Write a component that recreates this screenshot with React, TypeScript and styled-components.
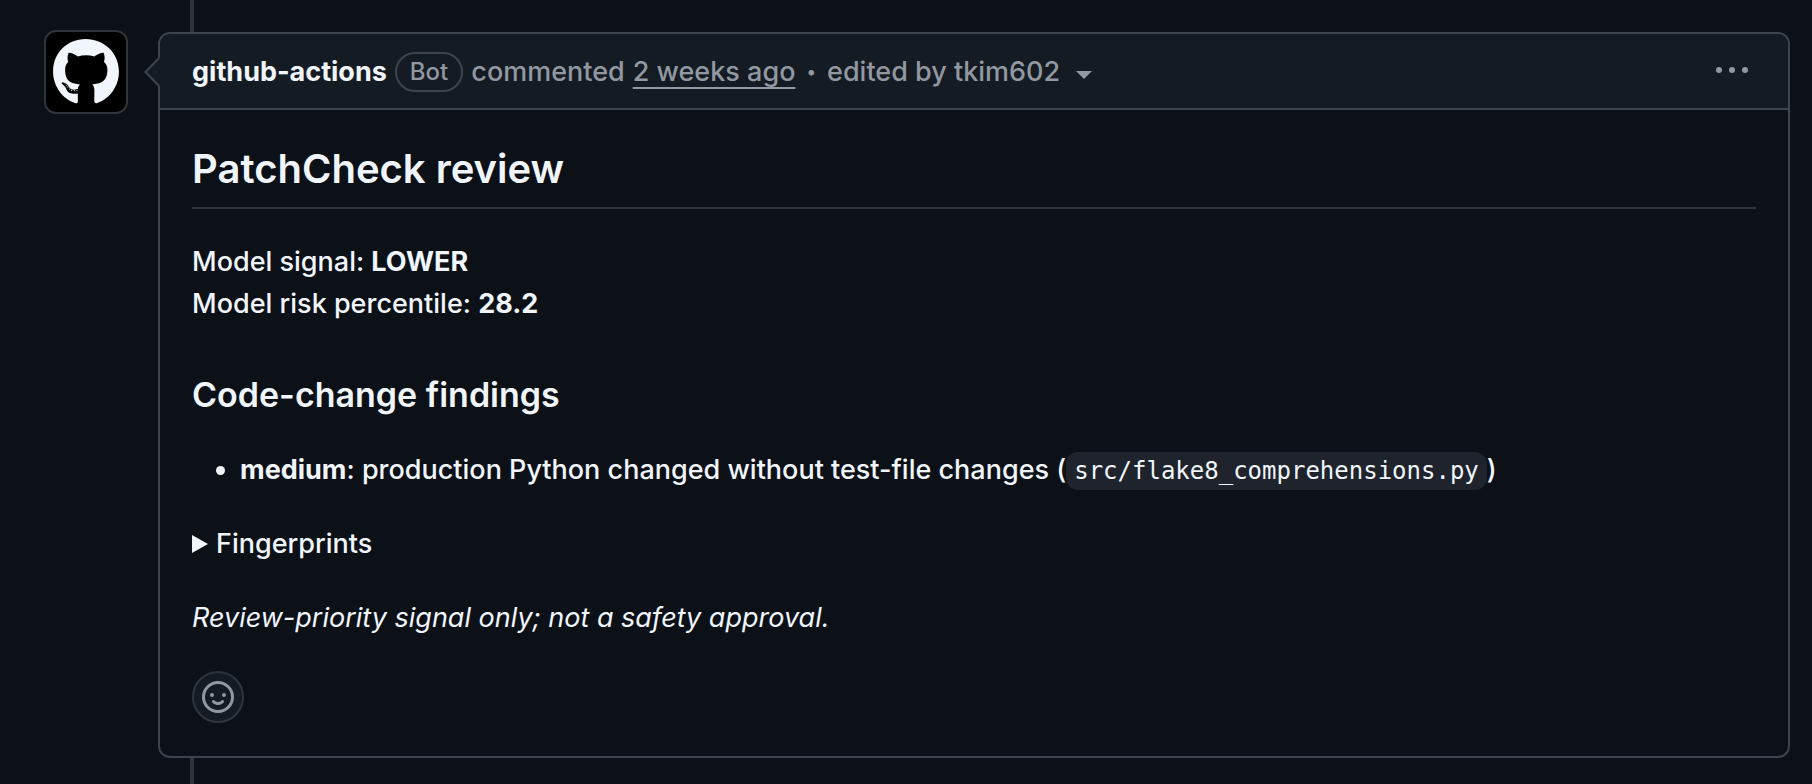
import React from "react";
import styled, { createGlobalStyle } from "styled-components";
import { FaGithub } from "react-icons/fa";

const color = {
  canvas: "#0c1017",
  header: "#151b23",
  border: "#3d444d",
  borderMuted: "#2f353d",
  text: "#f0f6fc",
  muted: "#9198a1",
  code: "#1f242c",
};

const GlobalStyle = createGlobalStyle`
  *, *::before, *::after { box-sizing: border-box; }
  body {
    margin: 0;
    background: ${color.canvas};
    color: ${color.text};
    font-family: Inter, "Liberation Sans", sans-serif;
    font-size: 27px;
    font-weight: 450;
    line-height: 42px;
  }
`;

const Page = styled.main`
  display: flex;
  flex-direction: column;
  min-height: 100vh;
  padding: 0 22px 0 44px;
`;

const TimelineRail = styled.div<{ $fill?: boolean }>`
  width: 4px;
  height: ${(p) => (p.$fill ? "auto" : "32px")};
  min-height: 26px;
  flex: ${(p) => (p.$fill ? "1" : "none")};
  margin-left: 146px;
  background: ${color.borderMuted};
`;

const TimelineItem = styled.div`
  display: flex;
  align-items: flex-start;
  gap: 30px;
`;

const Avatar = styled.a`
  display: flex;
  align-items: center;
  justify-content: center;
  flex: none;
  width: 84px;
  height: 84px;
  margin-top: -2px;
  border: 2px solid ${color.borderMuted};
  border-radius: 12px;
  background: #000;
  color: ${color.text};
`;

const Card = styled.article`
  position: relative;
  flex: 1;
  min-width: 0;
  border: 2px solid ${color.border};
  border-radius: 12px;
`;

const Pointer = styled.svg`
  position: absolute;
  left: -16px;
  top: 22px;
`;

const CardHeader = styled.header`
  display: flex;
  align-items: center;
  justify-content: space-between;
  min-height: 76px;
  padding: 0 32px;
  border-bottom: 2px solid ${color.border};
  border-radius: 10px 10px 0 0;
  background: ${color.header};
  color: ${color.muted};
`;

const Byline = styled.div`
  display: flex;
  align-items: center;
  flex-wrap: wrap;
  gap: 8px;
  padding-top: 2px;
`;

const Author = styled.a`
  color: ${color.text};
  font-weight: 700;
  text-decoration: none;
`;

const BotLabel = styled.span`
  padding: 0 13px;
  border: 2px solid ${color.border};
  border-radius: 20px;
  font-size: 24px;
  font-weight: 500;
  line-height: 36px;
`;

const Timestamp = styled.a`
  color: inherit;
  text-decoration: underline;
  text-decoration-thickness: 2px;
  text-underline-offset: 6px;
`;

const Separator = styled.span`
  padding: 0 3px;
  font-size: 18px;
`;

const PlainButton = styled.button`
  display: inline-flex;
  align-items: center;
  gap: 16px;
  padding: 0;
  border: 0;
  background: none;
  color: inherit;
  font: inherit;
  cursor: pointer;
`;

const Caret = styled.svg`
  margin-top: 6px;
`;

const Body = styled.div`
  padding: 32px 32px 33px;
`;

const Title = styled.h2`
  margin: 0 0 32px;
  padding-bottom: 11px;
  border-bottom: 2px solid ${color.borderMuted};
  font-size: 40px;
  font-weight: 600;
  line-height: 54px;
`;

const Subtitle = styled.h3`
  margin: 48px 0 32px;
  font-size: 34px;
  font-weight: 600;
  line-height: 44px;
`;

const Paragraph = styled.p`
  margin: 0 0 32px;
`;

const Strong = styled.strong`
  font-weight: 700;
`;

const Note = styled.em`
  font-weight: 400;
`;

const Findings = styled.ul`
  margin: 0 0 32px;
  padding-left: 48px;
`;

const Code = styled.code`
  padding: 5px 8px;
  border-radius: 12px;
  background: ${color.code};
  font-family: "DejaVu Sans Mono", monospace;
  font-size: 24px;
  line-height: 24px;
`;

const Disclosure = styled.details`
  margin-bottom: 32px;

  &[open] summary svg {
    transform: rotate(90deg);
  }
`;

const Summary = styled.summary`
  display: flex;
  align-items: center;
  gap: 8px;
  list-style: none;
  cursor: pointer;
`;

const ReactionButton = styled.button`
  display: flex;
  align-items: center;
  justify-content: center;
  width: 52px;
  height: 52px;
  padding: 0;
  border: 2px solid ${color.borderMuted};
  border-radius: 50%;
  background: ${color.header};
  color: ${color.muted};
  cursor: pointer;
`;

export default function App() {
  return (
    <>
      <GlobalStyle />
      <Page>
        <TimelineRail />
        <TimelineItem>
          <Avatar href="#author" aria-label="github-actions">
            <FaGithub size={68} />
          </Avatar>
          <Card>
            <Pointer width="16" height="32" viewBox="0 0 16 32" aria-hidden="true">
              <path d="M16 1 L1.5 16 L16 31 Z" fill={color.header} />
              <path d="M15 2 L1.5 16 L15 30" fill="none" stroke={color.border} strokeWidth="2" />
            </Pointer>
            <CardHeader>
              <Byline>
                <Author href="#author">github-actions</Author>
                <BotLabel>Bot</BotLabel>
                <span>commented</span>
                <Timestamp href="#comment">2 weeks ago</Timestamp>
                <Separator>•</Separator>
                <PlainButton type="button">
                  edited by tkim602
                  <Caret width="16" height="8" viewBox="0 0 16 8" aria-hidden="true">
                    <path d="M0 0h16L8 8z" fill="currentColor" />
                  </Caret>
                </PlainButton>
              </Byline>
              <PlainButton type="button" aria-label="Show options">
                <svg width="48" height="32" viewBox="0 0 48 32" fill="currentColor" aria-hidden="true">
                  <circle cx="11" cy="15" r="3" />
                  <circle cx="24" cy="15" r="3" />
                  <circle cx="37" cy="15" r="3" />
                </svg>
              </PlainButton>
            </CardHeader>
            <Body>
              <Title>PatchCheck review</Title>
              <Paragraph>
                Model signal: <Strong>LOWER</Strong>
                <br />
                Model risk percentile: <Strong>28.2</Strong>
              </Paragraph>
              <Subtitle>Code-change findings</Subtitle>
              <Findings>
                <li>
                  <Strong>medium</Strong>: production Python changed without test-file changes (
                  <Code>src/flake8_comprehensions.py</Code>)
                </li>
              </Findings>
              <Disclosure>
                <Summary>
                  <svg width="16" height="18" viewBox="0 0 16 18" aria-hidden="true">
                    <path d="M0 0v18L16 9z" fill="currentColor" />
                  </svg>
                  Fingerprints
                </Summary>
              </Disclosure>
              <Paragraph>
                <Note>Review-priority signal only; not a safety approval.</Note>
              </Paragraph>
              <ReactionButton type="button" aria-label="Add reaction">
                <svg width="32" height="32" viewBox="0 0 16 16" fill="currentColor" aria-hidden="true">
                  <path d="M8 0a8 8 0 1 1 0 16A8 8 0 0 1 8 0ZM1.5 8a6.5 6.5 0 1 0 13 0 6.5 6.5 0 0 0-13 0Zm3.82 1.636a.75.75 0 0 1 1.038.175l.007.009c.103.118.22.222.35.31.264.178.683.37 1.285.37.602 0 1.02-.192 1.285-.371.13-.088.247-.192.35-.31l.007-.008a.75.75 0 0 1 1.222.87l-.022-.015c.02.013.021.015.021.015v.001l-.001.002-.002.003-.005.007-.014.019a2.066 2.066 0 0 1-.184.213c-.16.166-.338.316-.53.445-.63.418-1.37.638-2.127.629-.946 0-1.652-.308-2.126-.63a3.331 3.331 0 0 1-.715-.657l-.014-.02-.005-.006-.002-.003v-.002h-.001l.613-.432-.614.43a.75.75 0 0 1 .183-1.044ZM12 7a1 1 0 1 1-2 0 1 1 0 0 1 2 0ZM5 8a1 1 0 1 1 0-2 1 1 0 0 1 0 2Z" />
                </svg>
              </ReactionButton>
            </Body>
          </Card>
        </TimelineItem>
        <TimelineRail $fill />
      </Page>
    </>
  );
}
